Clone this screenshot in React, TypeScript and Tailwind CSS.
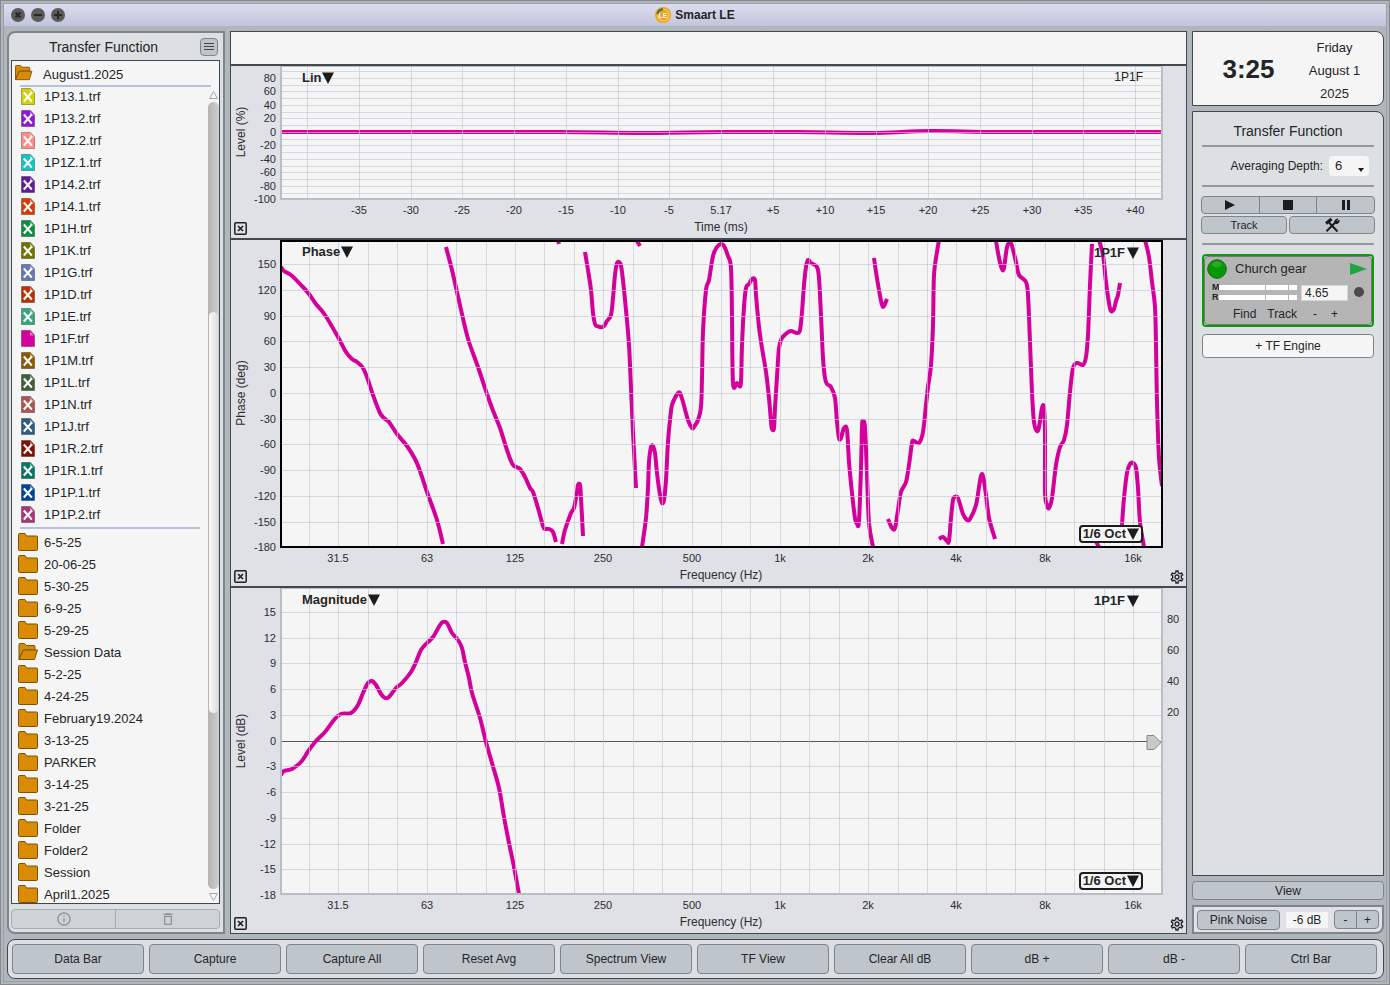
import { useState } from "react";
import type { ReactNode } from "react";
import { MdDeleteOutline, MdInfoOutline, MdOutlineSettings } from "react-icons/md";

const TRACE_COLOR = "#d3009b";

const TRACE_FILES = [
  { name: "1P13.1.trf", color: "#cfd400" },
  { name: "1P13.2.trf", color: "#9018cf" },
  { name: "1P1Z.2.trf", color: "#ff8b84" },
  { name: "1P1Z.1.trf", color: "#0cc6c6" },
  { name: "1P14.2.trf", color: "#63199c" },
  { name: "1P14.1.trf", color: "#d63c00" },
  { name: "1P1H.trf", color: "#0a8f3c" },
  { name: "1P1K.trf", color: "#737300" },
  { name: "1P1G.trf", color: "#6678b4" },
  { name: "1P1D.trf", color: "#b93205" },
  { name: "1P1E.trf", color: "#36a67c" },
  { name: "1P1F.trf", color: "#d3009b", active: true },
  { name: "1P1M.trf", color: "#8a5a00" },
  { name: "1P1L.trf", color: "#3f5f3d" },
  { name: "1P1N.trf", color: "#ad5450" },
  { name: "1P1J.trf", color: "#2e5c80" },
  { name: "1P1R.2.trf", color: "#851000" },
  { name: "1P1R.1.trf", color: "#007a62" },
  { name: "1P1P.1.trf", color: "#00459c" },
  { name: "1P1P.2.trf", color: "#ad3276" },
];

const FOLDERS = [
  "6-5-25",
  "20-06-25",
  "5-30-25",
  "6-9-25",
  "5-29-25",
  "Session Data",
  "5-2-25",
  "4-24-25",
  "February19.2024",
  "3-13-25",
  "PARKER",
  "3-14-25",
  "3-21-25",
  "Folder",
  "Folder2",
  "Session",
  "April1.2025",
];

const COMMANDS = [
  "Data Bar",
  "Capture",
  "Capture All",
  "Reset Avg",
  "Spectrum View",
  "TF View",
  "Clear All dB",
  "dB +",
  "dB -",
  "Ctrl Bar",
];

const LIN_TRACE = ["281,132 420,132 560,132 640,133 720,132 800,132 870,133 930,131 990,132 1060,132 1162,132"];

// The phase wraps at +/-180, so the trace is broken into runs
const PHASE_TRACE = [
  "281,267 284,271 291,275 302,286 309,294 316,304 325,315 338,337 346,352 352,359 357,362 363,368 368,380 373,395 380,413 385,419 389,422 397,434 407,446 415,459 420,471 427,492 437,520 443,544",
  "446,247 452,270 457,292 465,327 469,342 478,367 486,391 492,408 500,428 506,447 511,461 514,466 520,469 525,477 530,488 533,492 538,508 543,526 545,529 549,529 553,532 556,542",
  "562,544 565,530 571,513 574,508 577,492 578,485 580,485 581,498 583,536",
  "558,240 559,244",
  "585,252 588,270 591,290 593,313 595,324 597,326 603,327 607,321 611,315 613,298 615,275 617,263 620,263 622,272 626,310 629,345 631,388 633,432 636,488",
  "637,241 640,246",
  "642,547 646,518 648,488 649,462 651,447 653,446 655,453 657,473 660,495 662,503 664,500 666,480 668,442 670,420 672,405 676,396 678,393 680,393 683,402 688,420 692,428 694,427 698,420 701,407 702,378 703,332 706,290 709,280 713,256 717,247 721,244 724,246 728,256 731,268 732,315 733,383 737,383 739,386 741,382 742,345 744,307 746,288 749,284 752,279 755,280 756,295 759,327 762,348 766,372 769,398 771,422 772,429 774,428 775,408 777,377 779,348 782,338 787,333 791,331 797,333 800,330 802,312 804,285 806,267 808,260 811,263 817,267 819,278 821,315 823,358 825,378 827,384 831,387 835,398 837,422 839,438 841,438 844,428 847,430 849,462 852,493 855,518 857,524 859,521 861,468 862,427 863,421 865,428 867,475 869,523 873,547",
  "874,258 876,272 879,290 882,305 884,306 887,299",
  "888,519 892,528 895,528 898,510 901,492 906,482 909,465 912,443 914,441 919,443 923,432 926,405 928,387 931,365 933,325 934,275 937,252 939,240",
  "939,539 943,537 947,541 949,541 951,518 953,500 955,497 958,498 963,514 967,520 970,519 976,505 979,487 981,476 983,476 986,495 989,518 995,539",
  "996,241 999,258 1002,269 1004,268 1007,247 1010,243 1012,246 1016,262 1019,275 1026,282 1028,295 1030,342 1032,392 1034,422 1037,431 1039,427 1042,408 1044,408 1045,435 1045,492 1047,505 1049,508 1052,498 1056,465 1060,447 1064,440 1067,425 1070,392 1073,368 1077,363 1083,365 1086,357 1088,335 1090,285 1092,244",
  "1099,240 1103,255 1106,282 1109,303 1111,311 1114,309 1116,301 1118,295 1120,283",
  "1145,240 1149,257 1152,282 1155,307 1156,345 1157,402 1159,458 1162,486",
  "1095,540 1099,547",
  "1122,525 1124,498 1127,473 1130,464 1133,463 1136,468 1138,488 1140,522 1144,547",
];

const MAGNITUDE_TRACE = [
  "281,775 284,771 292,769 301,762 309,750 316,741 325,732 334,720 341,714 351,713 358,705 363,693 368,683 372,681 376,685 381,694 385,698 389,697 396,688 402,683 411,672 416,662 421,650 427,643 433,637 440,625 443,622 447,623 452,633 458,640 462,648 465,662 469,678 472,693 480,718 486,742 492,763 499,788 504,817 509,843 514,867 519,894",
];

const FREQUENCIES = ["31.5", "63", "125", "250", "500", "1k", "2k", "4k", "8k", "16k"];

const range = (count: number) => Array.from({ length: count }, (_, i) => i);

// Catmull-Rom spline through the points
function smoothPath(points: string) {
  const p = points.split(" ").map((pair) => pair.split(",").map(Number));
  let d = `M${p[0][0]},${p[0][1]}`;
  for (let i = 0; i < p.length - 1; i++) {
    const a = p[i - 1] ?? p[i];
    const b = p[i];
    const c = p[i + 1];
    const e = p[i + 2] ?? c;
    d += `C${b[0] + (c[0] - a[0]) / 6},${b[1] + (c[1] - a[1]) / 6} ${c[0] - (e[0] - b[0]) / 6},${c[1] - (e[1] - b[1]) / 6} ${c[0]},${c[1]}`;
  }
  return d;
}

interface Tick {
  at: number;
  label?: string;
}

interface PlotProps {
  top: number;
  height: number;
  bottom: number;
  xTicks: Tick[];
  yTicks: Tick[];
  rightTicks?: Tick[];
  xTitle: string;
  yTitle: string;
  yTitleAt: number;
  trace: string[];
  active?: boolean;
  zeroAt?: number;
}

function Plot({
  top,
  height,
  bottom,
  xTicks,
  yTicks,
  rightTicks = [],
  xTitle,
  yTitle,
  yTitleAt,
  trace,
  active,
  zeroAt,
}: PlotProps) {
  const clipId = `clip-${top}`;
  return (
    <svg
      viewBox={`231 ${top} 955 ${height}`}
      className="block h-full w-full text-[11px] text-[#2b2d30]"
      fill="currentColor"
    >
      <clipPath id={clipId}>
        <rect x="281" y={top} width="881" height={bottom - top} />
      </clipPath>
      <rect x="281" y={top} width="881" height={bottom - top} fill="#f5f5f5" />
      {zeroAt && <path d={`M281 ${zeroAt}H1162`} stroke="#54565c" />}
      <g clipPath={`url(#${clipId})`} fill="none" stroke={TRACE_COLOR} strokeWidth="4">
        {trace.map((points) => (
          <path key={points} d={smoothPath(points)} strokeLinejoin="round" />
        ))}
      </g>
      <g stroke="#c3c8d1" strokeOpacity="0.65" strokeWidth="1" shapeRendering="crispEdges">
        {xTicks.map(({ at }) => (
          <path key={at} d={`M${at} ${top}V${bottom}`} />
        ))}
        {yTicks.filter(({ at }) => at < bottom - 2 && at !== zeroAt).map(({ at }) => (
          <path key={at} d={`M281 ${at}H1162`} />
        ))}
      </g>
      <rect
        x="281"
        y={active ? top + 1 : top}
        width="881"
        height={active ? bottom - top - 1 : bottom - top}
        fill="none"
        stroke={active ? "#000" : "#b9bdc5"}
        strokeWidth="2"
      />
      <g textAnchor="middle">
        {xTicks.map(({ at, label }) => label && (
          <text key={at} x={Math.floor(at)} y={bottom + 15}>{label}</text>
        ))}
        {rightTicks.map(({ at, label }) => (
          <text key={at} x="1173" y={at + 4}>{label}</text>
        ))}
        <text x="721" y={bottom + 32} fontSize="12">{xTitle}</text>
        <text fontSize="12" transform={`translate(245 ${yTitleAt}) rotate(-90)`}>{yTitle}</text>
      </g>
      <g textAnchor="end">
        {yTicks.map(({ at, label }) => label && (
          <text key={at} x="276" y={Math.floor(at) + 4}>{label}</text>
        ))}
      </g>
      {zeroAt && <path d={`M1147 ${zeroAt - 6}h7l7 7l-7 7h-7z`} fill="#c9c9c9" stroke="#85878b" />}
    </svg>
  );
}

function Triangle() {
  return (
    <svg viewBox="0 0 12 12" className="pointer-events-none h-3 w-3 shrink-0" fill="#1c1c1c">
      <path d="M0 0.5h12L6 12z" />
    </svg>
  );
}

function PlotSelect({ label, options, className = "" }: { label: string; options: string[]; className?: string }) {
  return (
    <span className={`absolute flex items-center ${className}`}>
      <select
        aria-label={label}
        className="field-sizing-content h-4 cursor-pointer appearance-none bg-transparent p-0 text-[13px] leading-4 font-bold outline-none"
      >
        {options.map((option) => (
          <option key={option}>{option}</option>
        ))}
      </select>
      <Triangle />
    </span>
  );
}

function ClosePlot() {
  return (
    <button aria-label="Close plot" className="absolute bottom-[3px] left-[3px] h-[13px] w-[13px]">
      <svg viewBox="0 0 13 13" className="h-full w-full" fill="none" stroke="#1f2224" strokeWidth="1.5">
        <rect x="0.8" y="0.8" width="11.4" height="11.4" rx="1" />
        <path d="M4 4l5 5M9 4L4 9" strokeWidth="1.7" />
      </svg>
    </button>
  );
}

function PlotSettings() {
  return (
    <button aria-label="Plot settings" className="absolute right-[1px] bottom-[1px]">
      <MdOutlineSettings className="h-4 w-4 text-[#1f2224]" />
    </button>
  );
}

function FileIcon({ color, active }: { color: string; active?: boolean }) {
  return (
    <svg viewBox="0 0 14 17" className="h-[17px] w-[14px] shrink-0">
      <path d="M0.5 0.5h9l4 4.5v11.500h-13z" fill={color} stroke="#000" strokeOpacity="0.3" />
      <path d="M9 1v4.500h4z" fill="#fff" fillOpacity="0.45" />
      {!active && <path d="M2.800 4.500l8 9M10.800 4.500l-8 9" stroke="#fff" strokeWidth="2" />}
    </svg>
  );
}

function FolderIcon({ open, className }: { open?: boolean; className: string }) {
  return (
    <svg viewBox="0 0 20 18" className={className} fill="#d98b04" stroke="#7d5208" strokeLinejoin="round">
      {open ? (
        <>
          <path d="M1 16.500V1.500q0-1 1-1h4.500l2 2h7.500q1 0 1 1V7H5z" />
          <path d="M1 16.500L5.200 7H19.500L16.500 16.500z" />
        </>
      ) : (
        <path d="M0.500 16.500V1.500q0-1 1-1H7l1.500 2.500h10q1 0 1 1v12.500q0 1-1 1h-17q-1 0-1-1z" />
      )}
    </svg>
  );
}

function ToolsIcon() {
  return (
    <svg viewBox="0 0 16 16" className="h-4 w-4" fill="none" stroke="#1c1c1c">
      <path d="M5 5.500l8.500 9" strokeWidth="2" />
      <path d="M2 6.500L7.500 2" strokeWidth="3" />
      <path d="M2.500 14.200L11 5.800" strokeWidth="2" />
      <path d="M13.800 1.800L11.800 4l1.200 0.600 2-1.500c0.500 2.600-1.200 3.900-3.300 3.400-1.800-0.600-2.200-3 2.100-4.700z" fill="#1c1c1c" />
    </svg>
  );
}

function PanelButton({ children, className = "", label }: { children: ReactNode; className?: string; label?: string }) {
  return (
    <button
      aria-label={label}
      className={`flex items-center justify-center border border-[#7c858b] bg-[#bfc6cb] hover:bg-[#cbd1d5] ${className}`}
    >
      {children}
    </button>
  );
}

function TitleBar() {
  const symbols = [
    { name: "Close", d: "M4.500 4.500l5 5M9.500 4.500l-5 5" },
    { name: "Minimize", d: "M3 7h8" },
    { name: "Zoom", d: "M3 7h8M7 3v8" },
  ];
  return (
    <header className="grid h-[22px] shrink-0 grid-cols-3 items-center bg-linear-to-b from-[#dcddee] to-[#c1c4dc] px-[7px]">
      <div className="flex gap-1.5">
        {symbols.map(({ name, d }) => (
          <button key={name} aria-label={name}>
            <svg viewBox="0 0 14 14" className="block h-3.5 w-3.5">
              <circle cx="7" cy="7" r="7" fill="#5b5b5c" />
              <path d={d} stroke="#29292a" strokeWidth="2" />
            </svg>
          </button>
        ))}
      </div>
      <h1 className="flex items-center justify-center gap-1 text-xs font-bold">
        <svg viewBox="0 0 16 16" className="h-4 w-4">
          <circle cx="8" cy="8" r="8" fill="#f0a11c" />
          <path d="M2.500 7A5.800 5.800 0 0 1 8 2.200" fill="none" stroke="#22795c" strokeWidth="2" />
          <path d="M8 2.200A5.800 5.800 0 1 1 2.500 8" fill="none" stroke="#ffc34f" strokeWidth="1.500" />
          <text x="8" y="10.500" fontSize="7" fontWeight="bold" fill="#fff" textAnchor="middle">LE</text>
        </svg>
        Smaart LE
      </h1>
    </header>
  );
}

function DataBar() {
  return (
    <aside className="flex w-[218px] shrink-0 flex-col rounded-l-lg border-2 border-[#7d868c] bg-[#dde0e2] pr-[3px] pl-0.5">
      <div className="flex h-[27px] shrink-0 items-center justify-center">
        <h2 className="flex-1 pr-1 text-center text-sm">Transfer Function</h2>
        <PanelButton label="Menu" className="mr-0.5 h-[18px] w-[18px] rounded">
          <svg viewBox="0 0 12 12" className="h-3 w-3" stroke="#3d4347" strokeWidth="1.2">
            <path d="M1 2.500h10M1 5.500h10M1 8.500h10" />
          </svg>
        </PanelButton>
      </div>
      <div className="flex min-h-0 flex-1 flex-col border border-[#3f494f] bg-[#f5f5f5] text-[13px]">
        <div className="flex h-6 shrink-0 items-center gap-2.5 pl-0.5">
          <FolderIcon open className="h-4 w-[19px]" />
          <span className="pt-1">August1.2025</span>
        </div>
        <div className="mr-2 ml-2 h-0.5 shrink-0 bg-[#b5c3da]" />
        <div className="flex min-h-0 flex-1">
          <div className="-mt-0.5 flex-1 overflow-hidden">
            <ul>
              {TRACE_FILES.map((file) => (
                <li key={file.name} className="flex h-[22px] items-center gap-[9px] pl-[9px]">
                  <FileIcon color={file.color} active={file.active} />
                  <span className="pt-px">{file.name}</span>
                </li>
              ))}
            </ul>
            <div className="my-0.5 mr-2 ml-2 h-0.5 bg-[#b5c3da]" />
            <ul>
              {FOLDERS.map((name) => (
                <li key={name} className="flex h-[22px] items-center gap-1.5 pl-1.5">
                  <FolderIcon open={name === "Session Data"} className="h-[18px] w-5 shrink-0" />
                  <span className="pt-px">{name}</span>
                </li>
              ))}
            </ul>
          </div>
          <div className="flex w-[11px] flex-col items-center">
            <svg viewBox="0 0 11 15" className="h-[15px] w-[11px]" fill="none" stroke="#a5a8ab">
              <path d="M1.500 11.500h8L5.500 4.500z" />
            </svg>
            <div className="flex w-full flex-1 flex-col rounded-full bg-linear-to-r from-[#b3b3b3] to-[#cfcfcf] px-px">
              <div className="flex-[210]" />
              <div className="flex-[401] rounded-full bg-linear-to-r from-[#fafafa] to-[#dedede]" />
              <div className="flex-[176]" />
            </div>
            <svg viewBox="0 0 11 14" className="h-[14px] w-[11px]" fill="none" stroke="#a5a8ab">
              <path d="M1.500 4.500h8L5.500 11.500z" />
            </svg>
          </div>
        </div>
      </div>
      <div className="mt-[5px] mb-[3px] flex h-5 shrink-0 text-[#8d9599]">
        <button aria-label="Info" className="flex flex-1 items-center justify-center rounded-l border border-[#a5adb2] bg-[#ced3d6]">
          <MdInfoOutline className="h-4 w-4" />
        </button>
        <button aria-label="Delete" className="-ml-px flex flex-1 items-center justify-center rounded-r border border-[#a5adb2] bg-[#ced3d6]">
          <MdDeleteOutline className="h-4 w-4" />
        </button>
      </div>
    </aside>
  );
}

function Plots() {
  const frequencyTicks = range(29).map((i) => ({
    at: Math.round(309 + i * 29.43) + 0.5,
    label: i % 3 === 1 ? FREQUENCIES[(i - 1) / 3] : undefined,
  }));
  const timeTicks = range(17).map((i) => {
    const time = (i - 8) * 5;
    const label = time === 0 ? "5.17" : time > 0 ? `+${time}` : `${time}`;
    return { at: Math.round(307 + i * 51.75) + 0.5, label: i === 0 ? undefined : label };
  });
  const linTicks = range(20).map((i) => ({
    at: Math.round(71 + i * 6.76) + 0.5,
    label: i % 2 === 1 ? `${90 - i * 10}` : undefined,
  }));
  const phaseTicks = range(12).map((i) => ({
    at: Math.round(264 + i * 25.77) + 0.5,
    label: `${150 - i * 30}`,
  }));
  const magnitudeTicks = range(12).map((i) => ({
    at: Math.round(612 + i * 25.73) + 0.5,
    label: `${15 - i * 3}`,
  }));

  return (
    <main className="flex min-w-0 flex-1 flex-col gap-0.5 border border-[#3f494f] bg-[#3f494f]">
      <div className="h-8 shrink-0 bg-[#f5f5f5]" />
      <section className="relative min-h-0 flex-[172] bg-[#dfe1e6]">
        <Plot
          top={66}
          height={172}
          bottom={199}
          xTicks={timeTicks}
          yTicks={linTicks}
          xTitle="Time (ms)"
          yTitle="Level (%)"
          yTitleAt={132}
          trace={LIN_TRACE}
        />
        <PlotSelect label="Impulse view" options={["Lin", "Log", "ETC"]} className="top-1 left-[71px]" />
        <span className="absolute top-[3px] right-[43px] text-xs">1P1F</span>
        <ClosePlot />
      </section>
      <section className="relative min-h-0 flex-[346] bg-[#dfe1e6]">
        <Plot
          active
          top={240}
          height={346}
          bottom={547}
          xTicks={frequencyTicks}
          yTicks={phaseTicks}
          xTitle="Frequency (Hz)"
          yTitle="Phase (deg)"
          yTitleAt={393}
          trace={PHASE_TRACE}
        />
        <PlotSelect label="Upper plot" options={["Phase", "Magnitude", "Coherence"]} className="top-1 left-[71px] gap-px" />
        <PlotSelect label="Front phase trace" options={["1P1F"]} className="top-[5px] right-[47px] gap-0.5" />
        <PlotSelect
          label="Phase smoothing"
          options={["1/6 Oct", "1/3 Oct", "1/12 Oct"]}
          className="right-[43px] bottom-[43px] h-[18px] gap-px rounded border-2 border-[#1c1c1c] bg-[#f5f5f5] px-0.5"
        />
        <ClosePlot />
        <PlotSettings />
      </section>
      <section className="relative min-h-0 flex-[345] bg-[#dfe1e6]">
        <Plot
          top={588}
          height={345}
          bottom={894}
          xTicks={frequencyTicks}
          yTicks={magnitudeTicks}
          rightTicks={[80, 60, 40, 20].map((value, i) => ({ at: 619 + i * 31, label: `${value}` }))}
          xTitle="Frequency (Hz)"
          yTitle="Level (dB)"
          yTitleAt={741}
          trace={MAGNITUDE_TRACE}
          zeroAt={741.5}
        />
        <PlotSelect label="Lower plot" options={["Magnitude", "Phase", "Coherence"]} className="top-1 left-[71px] gap-px" />
        <PlotSelect label="Front magnitude trace" options={["1P1F"]} className="top-[5px] right-[47px] gap-0.5" />
        <PlotSelect
          label="Magnitude smoothing"
          options={["1/6 Oct", "1/3 Oct", "1/12 Oct"]}
          className="right-[43px] bottom-[43px] h-[18px] gap-px rounded border-2 border-[#1c1c1c] bg-[#f5f5f5] px-0.5"
        />
        <ClosePlot />
        <PlotSettings />
      </section>
    </main>
  );
}

function LevelMeter({ name }: { name: string }) {
  return (
    <div className="flex h-2.5 items-center">
      <span className="w-[7px] text-[9px] leading-none font-bold">{name}</span>
      <div className="flex h-[5px] flex-1 gap-px">
        <div className="flex-[46] bg-white" />
        <div className="flex-[22] bg-white" />
        <div className="flex-[8] bg-white" />
      </div>
    </div>
  );
}

function EngineCard() {
  return (
    <div className="h-[73px] shrink-0 rounded border-2 border-[#0a9c0a]">
      <div className="flex h-full flex-col rounded-sm border border-[#77777a] bg-[#b5b5b5] px-0.5 text-xs">
        <div className="flex h-6 items-center">
          <svg viewBox="0 0 20 20" className="h-5 w-5">
            <circle cx="10" cy="10" r="9.300" fill="#079807" stroke="#0d6f0d" />
            <ellipse cx="10" cy="5.500" rx="5" ry="3" fill="#fff" fillOpacity="0.15" />
          </svg>
          <span className="flex-1 pl-2 text-[13px]">Church gear</span>
          <button aria-label="Run" className="mr-0.5">
            <svg viewBox="0 0 17 12" className="h-3 w-[17px]">
              <path d="M0 0l17 6L0 12z" fill="#1fa541" />
            </svg>
          </button>
        </div>
        <div className="flex h-[22px] items-center pl-[5px]">
          <div className="w-[85px]">
            <LevelMeter name="M" />
            <LevelMeter name="R" />
          </div>
          <input
            aria-label="Delay (ms)"
            defaultValue="4.65"
            className="mt-0.5 ml-1 h-4 w-[47px] border border-[#d5d5d5] bg-[#f5f5f5] pl-[3px] outline-none"
          />
          <span className="ml-[6px] h-2.5 w-2.5 rounded-full bg-[#4a4a4b]" />
        </div>
        <div className="flex flex-1 items-center pl-[26px]">
          <button>Find</button>
          <button className="ml-[11px]">Track</button>
          <button className="ml-4">-</button>
          <button className="ml-3.5">+</button>
        </div>
      </div>
    </div>
  );
}

function ControlBar() {
  const [depth, setDepth] = useState("6");

  return (
    <aside className="flex w-48 shrink-0 flex-col gap-[5px]">
      <div className="flex h-[75px] shrink-0 items-center rounded-r-lg border border-[#3f494f] bg-[#f5f5f5]">
        <time className="w-[111px] text-center text-[26px] leading-none font-bold">3:25</time>
        <div className="w-[61px] pt-[3px] text-center text-[13px] leading-[23px]">
          <div>Friday</div>
          <div>August 1</div>
          <div>2025</div>
        </div>
      </div>

      <div className="flex min-h-0 flex-1 flex-col rounded-tr-lg border border-[#3f494f] bg-[#dde0e3] px-[9px]">
        <h2 className="flex h-[33px] items-center justify-center pt-[5px] text-sm">Transfer Function</h2>
        <hr className="border-t-2 border-[#92989c]" />
        <div className="flex h-[38px] items-center justify-end gap-[6px] pr-[5px] text-xs">
          <label htmlFor="depth">Averaging Depth:</label>
          <span className="relative flex items-center">
            <select
              id="depth"
              value={depth}
              onChange={(e) => setDepth(e.target.value)}
              className="h-5 w-10 appearance-none rounded-sm bg-[#f5f5f5] pl-1.5 text-[13px]"
            >
              {["2", "4", "6", "8", "16"].map((value) => (
                <option key={value}>{value}</option>
              ))}
            </select>
            <svg viewBox="0 0 6 4" className="pointer-events-none absolute right-[5px] bottom-1 h-1 w-1.5">
              <path d="M0 0h6L3 4z" fill="#1c1c1c" />
            </svg>
          </span>
        </div>
        <hr className="border-t-2 border-[#92989c]" />
        <div className="-mx-px mt-[9px] flex h-[18px]">
          <PanelButton label="Play" className="flex-1 rounded-l">
            <svg viewBox="0 0 10 10" className="h-2.5 w-2.5"><path d="M0 0l10 5L0 10z" fill="#1c1c1c" /></svg>
          </PanelButton>
          <PanelButton label="Stop" className="-ml-px flex-1">
            <svg viewBox="0 0 10 10" className="h-2.5 w-2.5"><path d="M0 0h10v10H0z" fill="#1c1c1c" /></svg>
          </PanelButton>
          <PanelButton label="Pause" className="-ml-px flex-1 rounded-r">
            <svg viewBox="0 0 10 10" className="h-2.5 w-2.5"><path d="M1 0h3v10H1zM6 0h3v10H6z" fill="#1c1c1c" /></svg>
          </PanelButton>
        </div>
        <div className="-mx-px mt-0.5 mb-[9px] flex h-[18px] gap-0.5">
          <PanelButton className="flex-1 rounded text-[11px]">Track</PanelButton>
          <PanelButton label="Tools" className="flex-1 rounded"><ToolsIcon /></PanelButton>
        </div>
        <hr className="mb-[9px] border-t-2 border-[#92989c]" />
        <EngineCard />
        <button className="mt-[7px] h-6 shrink-0 rounded border border-[#7c858b] bg-[#f5f5f5] text-xs">+ TF Engine</button>
      </div>

      <PanelButton className="h-[19px] shrink-0 rounded text-xs">View</PanelButton>
      <div className="flex h-[29px] shrink-0 items-center rounded-br-lg border-2 border-[#7d868c] bg-[#dfe1e6] px-[3px] text-xs">
        <PanelButton className="h-5 w-[83px] rounded">Pink Noise</PanelButton>
        <output className="mx-[6px] flex h-4 flex-1 items-center justify-center bg-[#f5f5f5]">-6 dB</output>
        <PanelButton className="h-[19px] w-[23px] rounded-l">-</PanelButton>
        <PanelButton className="-ml-px h-[19px] w-[23px] rounded-r">+</PanelButton>
      </div>
    </aside>
  );
}

export default function App() {
  return (
    <div className="h-screen border border-[#85898c] bg-[#afb7bd] p-0.5 font-['Liberation_Sans',Arial,sans-serif] text-[#232527]">
      <div className="flex h-full flex-col border border-[#98a1a7]">
        <TitleBar />
        <div className="flex min-h-0 flex-1 gap-[5px] pt-[5px] pr-0.5 pl-[3px]">
          <DataBar />
          <Plots />
          <ControlBar />
        </div>
        <nav className="mt-[5px] mr-0.5 mb-0.5 ml-[3px] flex h-10 shrink-0 items-center gap-[5px] rounded-lg border border-[#3f494f] bg-[#dde0e3] pr-1.5 pl-1">
          {COMMANDS.map((command) => (
            <PanelButton key={command} className="h-[30px] flex-1 rounded text-xs">{command}</PanelButton>
          ))}
        </nav>
      </div>
    </div>
  );
}
